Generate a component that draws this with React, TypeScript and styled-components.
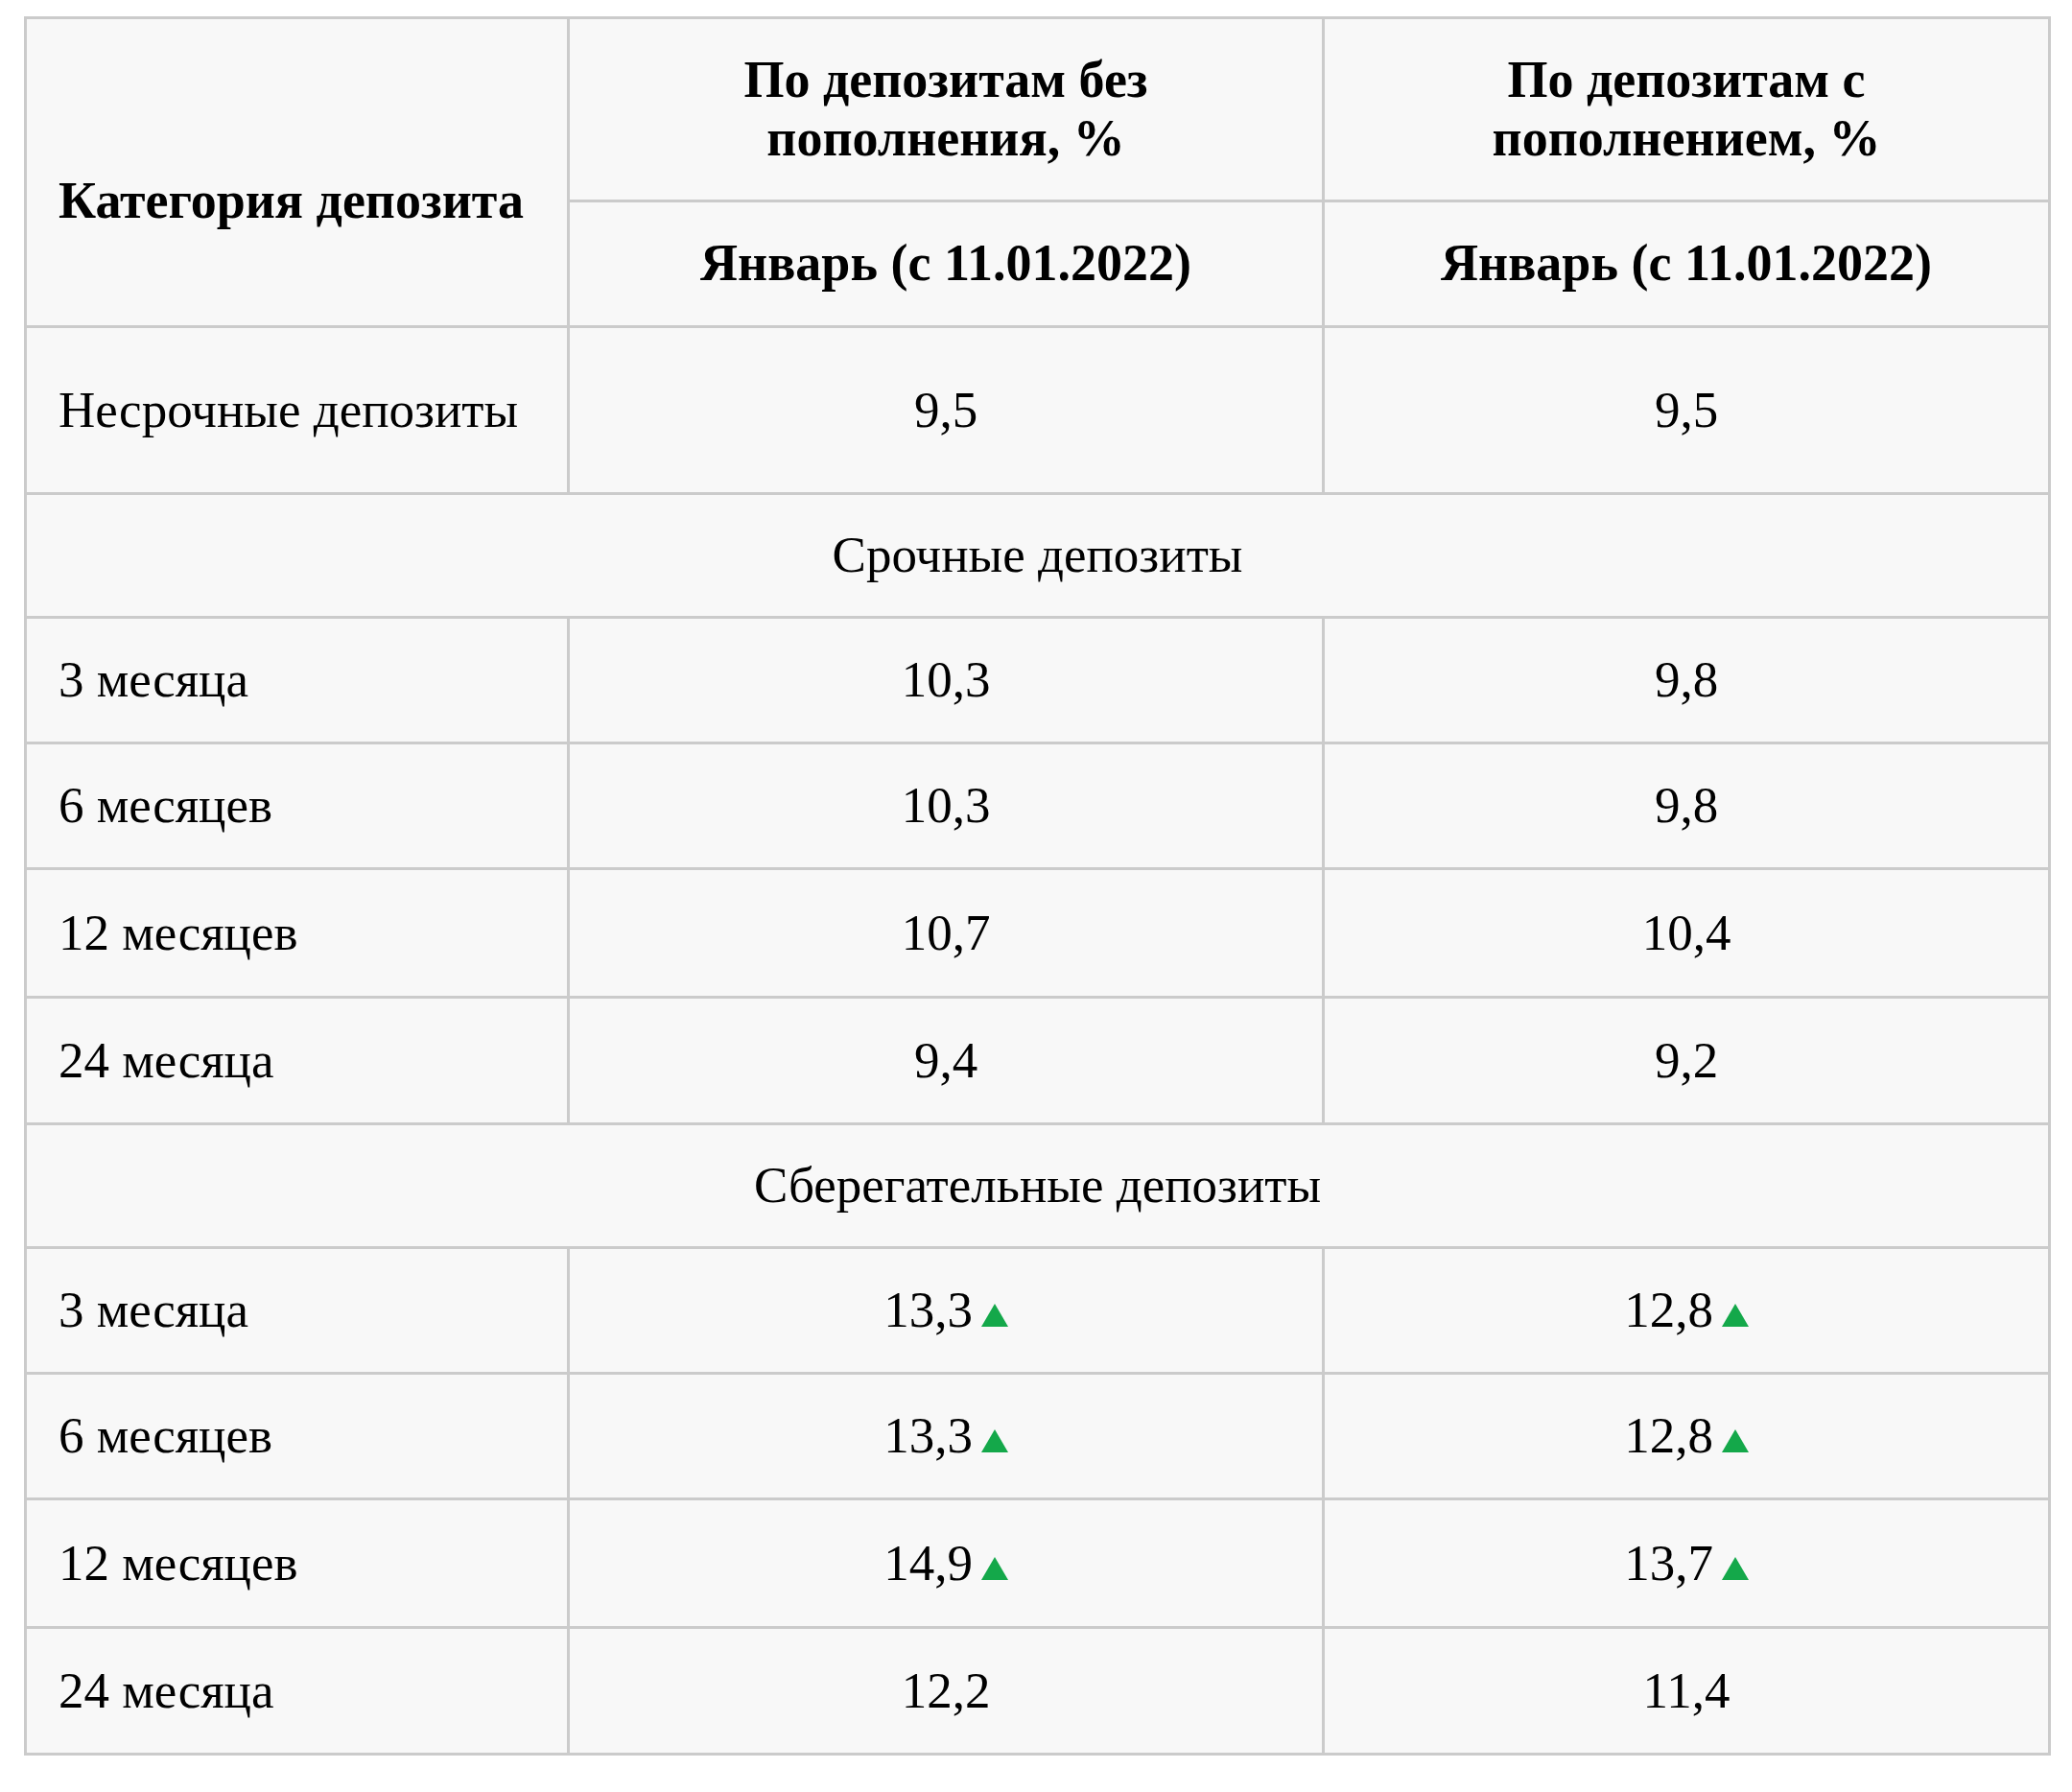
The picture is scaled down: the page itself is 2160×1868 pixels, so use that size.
import React from "react";
import styled, { createGlobalStyle } from "styled-components";

const Global = createGlobalStyle`
  html, body {
    margin: 0;
    padding: 0;
    background: #ffffff;
  }
  body {
    font-family: "Liberation Serif", "Times New Roman", serif;
    color: #000000;
  }
`;

const Page = styled.div`
  padding: 17px 0 40px 25px;
`;

const Table = styled.table`
  border-collapse: collapse;
  table-layout: fixed;
  width: 2113px;
  background: #f8f8f8;
  font-family: "Liberation Serif", "Times New Roman", serif;
  font-size: 53px;
  color: #000;
`;

const Row = styled.tr<{ $h: number }>`
  height: ${(p) => p.$h}px;
`;

const HeadCell = styled.th<{ $pt?: number; $align?: "left" | "center" }>`
  border: 3px solid #cbcbcb;
  font-weight: 700;
  font-size: 54px;
  line-height: 1.13;
  text-align: ${(p) => p.$align ?? "center"};
  vertical-align: middle;
  white-space: nowrap;
  padding: ${(p) => p.$pt ?? 0}px 10px 0 ${(p) => (p.$align === "left" ? 33 : 10)}px;
`;

const Cell = styled.td<{ $align?: "left" | "center" }>`
  border: 3px solid #cbcbcb;
  font-weight: 400;
  line-height: 1.2;
  text-align: ${(p) => p.$align ?? "center"};
  vertical-align: middle;
  padding: 0 10px 0 ${(p) => (p.$align === "left" ? 33 : 10)}px;
  white-space: nowrap;
`;

const Up = styled.svg`
  width: 28px;
  height: 24px;
  margin-left: 9px;
  vertical-align: baseline;
`;

const UpMark = () => (
  <Up viewBox="0 0 28 24" aria-hidden>
    <polygon points="14,0 28,24 0,24" fill="#14a84a" />
  </Up>
);

type DataRow = { label: string; a: string; b: string; up?: boolean; h: number };

const term: DataRow[] = [
  { label: "3 месяца", a: "10,3", b: "9,8", h: 131 },
  { label: "6 месяцев", a: "10,3", b: "9,8", h: 131 },
  { label: "12 месяцев", a: "10,7", b: "10,4", h: 134 },
  { label: "24 месяца", a: "9,4", b: "9,2", h: 132 },
];

const savings: DataRow[] = [
  { label: "3 месяца", a: "13,3", b: "12,8", up: true, h: 131 },
  { label: "6 месяцев", a: "13,3", b: "12,8", up: true, h: 131 },
  { label: "12 месяцев", a: "14,9", b: "13,7", up: true, h: 134 },
  { label: "24 месяца", a: "12,2", b: "11,4", h: 132 },
];

const Rows = ({ rows }: { rows: DataRow[] }) => (
  <>
    {rows.map((r, i) => (
      <Row $h={r.h} key={i}>
        <Cell $align="left">{r.label}</Cell>
        <Cell>
          {r.a}
          {r.up && <UpMark />}
        </Cell>
        <Cell>
          {r.b}
          {r.up && <UpMark />}
        </Cell>
      </Row>
    ))}
  </>
);

export default function App() {
  return (
    <>
      <Global />
      <Page>
        <Table>
          <colgroup>
            <col style={{ width: 566 }} />
            <col style={{ width: 787 }} />
            <col style={{ width: 757 }} />
          </colgroup>
          <thead>
            <Row $h={191}>
              <HeadCell rowSpan={2} $align="left" $pt={60}>
                Категория депозита
              </HeadCell>
              <HeadCell>
                По депозитам без
                <br />
                пополнения, %
              </HeadCell>
              <HeadCell>
                По депозитам с
                <br />
                пополнением, %
              </HeadCell>
            </Row>
            <Row $h={131}>
              <HeadCell>Январь (с 11.01.2022)</HeadCell>
              <HeadCell>Январь (с 11.01.2022)</HeadCell>
            </Row>
          </thead>
          <tbody>
            <Row $h={174}>
              <Cell $align="left">Несрочные депозиты</Cell>
              <Cell>9,5</Cell>
              <Cell>9,5</Cell>
            </Row>
            <Row $h={129}>
              <Cell colSpan={3}>Срочные депозиты</Cell>
            </Row>
            <Rows rows={term} />
            <Row $h={129}>
              <Cell colSpan={3}>Сберегательные депозиты</Cell>
            </Row>
            <Rows rows={savings} />
          </tbody>
        </Table>
      </Page>
    </>
  );
}
